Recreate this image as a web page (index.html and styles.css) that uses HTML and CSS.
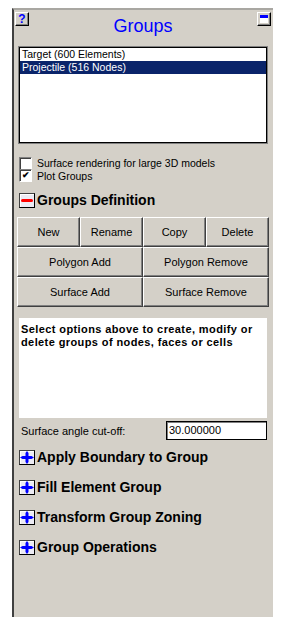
FILE: index.html
```html
<!DOCTYPE html>
<html lang="en">
<head>
    <meta charset="UTF-8">
    <meta name="viewport" content="width=device-width, initial-scale=1.0">
    <title>Groups</title>
    <link rel="stylesheet" href="styles.css">
</head>
<body>
    <!-- groups panel -->
    <div class="panel">
        <div class="panel-head">
            <button class="tool-btn help-btn">?</button>
            <div class="panel-title">Groups</div>
            <button class="tool-btn min-btn"><span class="min-icon"></span></button>
        </div>

        <div class="list-box">
            <div class="list-item">Target (600 Elements)</div>
            <div class="list-item selected">Projectile (516 Nodes)</div>
        </div>

        <div class="checks">
            <label class="check-row"><span class="check-box"></span>Surface rendering for large 3D models</label>
            <label class="check-row"><span class="check-box checked">&#10004;</span>Plot Groups</label>
        </div>

        <div class="section open">
            <span class="toggle">
                <svg width="14" height="13" viewBox="0 0 14 13"><rect x="1" y="5" width="12" height="3" rx="1.5" fill="#ff0000"/></svg>
            </span>
            <span class="section-title">Groups Definition</span>
        </div>

        <div class="btn-grid">
            <button class="win-btn">New</button>
            <button class="win-btn">Rename</button>
            <button class="win-btn">Copy</button>
            <button class="win-btn">Delete</button>
            <button class="win-btn wide">Polygon Add</button>
            <button class="win-btn wide">Polygon Remove</button>
            <button class="win-btn wide">Surface Add</button>
            <button class="win-btn wide">Surface Remove</button>
        </div>

        <div class="message">
            Select options above to create, modify or delete groups of nodes, faces or cells
        </div>

        <div class="field-row">
            <span class="field-label">Surface angle cut-off:</span>
            <span class="field-input">30.000000</span>
        </div>

        <div class="sections">
            <div class="section">
                <span class="toggle"><svg width="14" height="13" viewBox="0 0 14 13"><path d="M7 0 L8.5 2 V5 H11.5 L14 6.5 L11.5 8 H8.5 V11 L7 13 L5.5 11 V8 H2.5 L0 6.5 L2.5 5 H5.5 V2 Z" fill="#0000ff"/></svg></span>
                <span class="section-title">Apply Boundary to Group</span>
            </div>
            <div class="section">
                <span class="toggle"><svg width="14" height="13" viewBox="0 0 14 13"><path d="M7 0 L8.5 2 V5 H11.5 L14 6.5 L11.5 8 H8.5 V11 L7 13 L5.5 11 V8 H2.5 L0 6.5 L2.5 5 H5.5 V2 Z" fill="#0000ff"/></svg></span>
                <span class="section-title">Fill Element Group</span>
            </div>
            <div class="section">
                <span class="toggle"><svg width="14" height="13" viewBox="0 0 14 13"><path d="M7 0 L8.5 2 V5 H11.5 L14 6.5 L11.5 8 H8.5 V11 L7 13 L5.5 11 V8 H2.5 L0 6.5 L2.5 5 H5.5 V2 Z" fill="#0000ff"/></svg></span>
                <span class="section-title">Transform Group Zoning</span>
            </div>
            <div class="section">
                <span class="toggle"><svg width="14" height="13" viewBox="0 0 14 13"><path d="M7 0 L8.5 2 V5 H11.5 L14 6.5 L11.5 8 H8.5 V11 L7 13 L5.5 11 V8 H2.5 L0 6.5 L2.5 5 H5.5 V2 Z" fill="#0000ff"/></svg></span>
                <span class="section-title">Group Operations</span>
            </div>
        </div>
    </div>
</body>
</html>
```

FILE: styles.css
```css
/* reset */
* {
    margin: 0;
    padding: 0;
    box-sizing: border-box;
}

body {
    background: #fff;
    font-family: "Liberation Sans", Arial, sans-serif;
    font-size: 11px;
    color: #000;
}

/* panel frame */
.panel {
    margin: 8px 0 0 12px;
    width: 261px;
    height: 609px;
    background: #d4d0c8;
    border-top: 2px solid #a9a7a2;
    border-left: 2px solid #404040;
    padding: 0 6px 0 5px;
}

/* header */
.panel-head {
    display: flex;
    justify-content: space-between;
    align-items: flex-start;
    height: 37px;
    margin: 0 -4px 0 -4px;
    padding-top: 2px;
}

.tool-btn {
    width: 14px;
    height: 14px;
    background: #d4d0c8;
    border: 1px solid;
    border-color: #fff #000 #000 #fff;
    box-shadow: inset -1px -1px #808080;
    display: flex;
    align-items: center;
    justify-content: center;
    font-family: "Liberation Sans", Arial, sans-serif;
}

.help-btn {
    color: #0000ff;
    font-weight: bold;
    font-size: 12px;
    line-height: 12px;
}

.min-icon {
    width: 8px;
    height: 8px;
    background: #fff;
    border-top: 3px solid #0000ff;
}

.panel-title {
    color: #0000ff;
    font-size: 18px;
    line-height: 21px;
    margin-top: 4px;
}

/* list */
.list-box {
    height: 96px;
    background: #fff;
    border: 1px solid #000;
    box-shadow: 0 0 0 1px #808080;
    font-size: 10.5px;
}

.list-item {
    line-height: 13px;
    padding-left: 2px;
}

.list-item.selected {
    background: #0a246a;
    color: #fff;
}

/* checkboxes */
.checks {
    margin-top: 14px;
    font-size: 10.5px;
}

.check-row {
    display: flex;
    align-items: center;
    gap: 5px;
    height: 12.5px;
}

.check-box {
    width: 13px;
    height: 13px;
    background: #fff;
    border: 1px solid;
    border-color: #808080 #fff #fff #808080;
    box-shadow: inset 1px 1px #404040;
    font-size: 9px;
    line-height: 11px;
    text-align: center;
    font-weight: bold;
}

/* collapsible sections */
.section {
    display: flex;
    align-items: center;
    gap: 2px;
    height: 15px;
}

.section.open {
    margin-top: 11px;
}

.toggle {
    width: 16px;
    height: 15px;
    background: #ecebf4;
    border: 1px solid;
    border-color: #404040 #000 #000 #404040;
    box-shadow: inset 1px 1px #fff;
    display: flex;
    align-items: center;
    justify-content: center;
}

.section-title {
    font-weight: bold;
    font-size: 14px;
    line-height: 15px;
}

.sections {
    margin-top: 10px;
    display: flex;
    flex-direction: column;
    gap: 15px;
}

/* button grid */
.btn-grid {
    display: grid;
    grid-template-columns: repeat(4, 63px);
    grid-auto-rows: 30px;
    margin: 9px -4px 0 -2px;
}

.win-btn {
    background: #d4d0c8;
    border: 1px solid;
    border-color: #fff #404040 #404040 #fff;
    box-shadow: inset -1px -1px #808080;
    font-family: "Liberation Sans", Arial, sans-serif;
    font-size: 11px;
    color: #000;
}

.win-btn.wide {
    grid-column: span 2;
}

/* message area */
.message {
    margin-top: 11px;
    height: 100px;
    background: #fff;
    padding: 5px 2px 0 2px;
    font-weight: bold;
    line-height: 13px;
    letter-spacing: 0.4px;
}

.field-row {
    display: flex;
    justify-content: space-between;
    align-items: center;
    margin-top: 3px;
    padding-left: 2px;
}

.field-input {
    width: 101px;
    height: 19px;
    background: #fff;
    border: 1px solid #000;
    box-shadow: inset 1px 1px #808080;
    padding-left: 2px;
    line-height: 17px;
}
```
